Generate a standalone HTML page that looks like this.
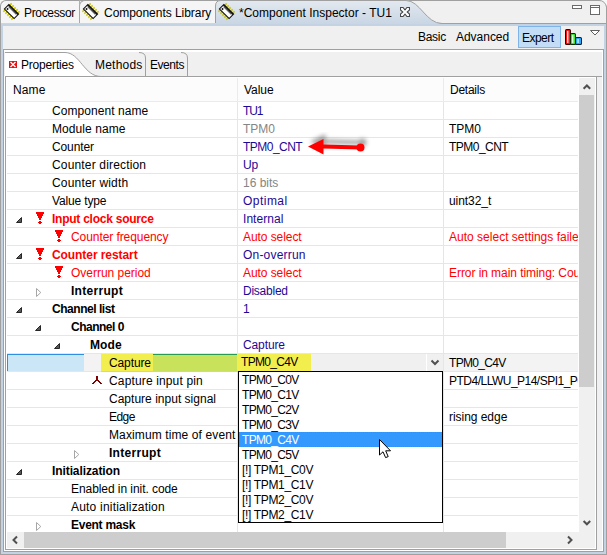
<!DOCTYPE html>
<html><head><meta charset="utf-8"><title>Component Inspector</title>
<style>
html,body{margin:0;padding:0;}
body{width:607px;height:555px;overflow:hidden;position:relative;font-family:"Liberation Sans", sans-serif;font-size:12px;background:#f0f0f0;}
</style></head><body>
<div style="position:absolute;left:0px;top:0px;width:607px;height:555px;background:#f0f0f0"></div>
<div style="position:absolute;left:0px;top:0px;width:607px;height:23px;background:#f6f6f6"></div>
<div style="position:absolute;left:6px;top:0px;width:601px;height:23px;background:#f0f0f0;border-top:1px solid #a0a0a0;box-sizing:border-box"></div>
<div style="position:absolute;left:0;top:0;width:80px;height:23px;background:#f5f5f5;border-left:1px solid #a0a0a0;border-top:1px solid #a0a0a0;border-right:1px solid #b0b0b0;border-top-left-radius:6px;box-sizing:border-box"></div>
<div style="position:absolute;left:79px;top:0;width:137px;height:23px;background:#f5f5f5;border-top:1px solid #a0a0a0;border-left:1px solid #a8a8a8;border-top-left-radius:6px;box-sizing:border-box"></div>
<div style="position:absolute;left:0px;top:23px;width:607px;height:1px;background:#a0a0a0"></div>
<svg style="position:absolute;left:0;top:0" width="607" height="26">
<defs><linearGradient id="ag" x1="0" y1="0" x2="0" y2="1"><stop offset="0" stop-color="#e3e9f0"/><stop offset="1" stop-color="#c6d4e2"/></linearGradient></defs>
<path d="M215,23 L215,6 Q215,0.5 221,0.5 L406,0.5 C420,0.5 426,23.5 442,23.5 L607,23.5 L607,26 L0,26 L0,23 Z" fill="url(#ag)"/>
<path d="M215.5,23 L215.5,6 Q215.5,0.5 221,0.5 L406,0.5 C420,0.5 426,23.5 442,23.5 L606,23.5" fill="none" stroke="#a0a0a0" stroke-width="1"/>
</svg>
<div style="position:absolute;left:1px;top:24px;width:605px;height:2px;background:#c3d3e3"></div>
<div style="position:absolute;left:1px;top:24px;width:2px;height:530px;background:#c3d3e3"></div>
<div style="position:absolute;left:604px;top:24px;width:2px;height:530px;background:#c3d3e3"></div>
<div style="position:absolute;left:1px;top:552px;width:605px;height:2px;background:#c3d3e3"></div>
<div style="position:absolute;left:0px;top:6px;width:1px;height:549px;background:#a0a0a0"></div>
<div style="position:absolute;left:606px;top:0px;width:1px;height:555px;background:#a0a0a0"></div>
<div style="position:absolute;left:0px;top:554px;width:607px;height:1px;background:#a0a0a0"></div>
<div style="position:absolute;left:3px;top:26px;width:601px;height:23px;background:#f0f0f0"></div>
<div style="position:absolute;left:3px;top:49px;width:601px;height:503px;background:#ffffff;border:1px solid #a0a0a0;box-sizing:border-box"></div>
<svg style="position:absolute;left:2px;top:2px" width="20" height="20" viewBox="-10 -10 20 20">
<g transform="translate(-0.5,-0.5) rotate(-45)"><rect x="-5.9" y="-6.3999999999999995" width="2.5" height="1.6" fill="#d0c800"/><rect x="3.4" y="-6.3999999999999995" width="2.5" height="1.6" fill="#d0c800"/><rect x="-5.9" y="-3.5999999999999996" width="2.5" height="1.6" fill="#d0c800"/><rect x="3.4" y="-3.5999999999999996" width="2.5" height="1.6" fill="#d0c800"/><rect x="-5.9" y="-0.8" width="2.5" height="1.6" fill="#d0c800"/><rect x="3.4" y="-0.8" width="2.5" height="1.6" fill="#d0c800"/><rect x="-5.9" y="1.9999999999999998" width="2.5" height="1.6" fill="#d0c800"/><rect x="3.4" y="1.9999999999999998" width="2.5" height="1.6" fill="#d0c800"/><rect x="-5.9" y="4.8" width="2.5" height="1.6" fill="#d0c800"/><rect x="3.4" y="4.8" width="2.5" height="1.6" fill="#d0c800"/>
<rect x="-3.7" y="-7.4" width="7.4" height="14.8" fill="#111"/>
<rect x="-2.6" y="-6.3" width="4.4" height="12.6" fill="#fff"/>
<rect x="0.8" y="-5.5" width="1.0" height="11.0" fill="#555"/>
<rect x="-1.9" y="-5.4" width="1.7" height="1.7" fill="#111"/>
</g></svg>
<svg style="position:absolute;left:81px;top:2px" width="20" height="20" viewBox="-10 -10 20 20">
<g transform="translate(-0.5,-0.5) rotate(-45)"><rect x="-5.9" y="-6.3999999999999995" width="2.5" height="1.6" fill="#d0c800"/><rect x="3.4" y="-6.3999999999999995" width="2.5" height="1.6" fill="#d0c800"/><rect x="-5.9" y="-3.5999999999999996" width="2.5" height="1.6" fill="#d0c800"/><rect x="3.4" y="-3.5999999999999996" width="2.5" height="1.6" fill="#d0c800"/><rect x="-5.9" y="-0.8" width="2.5" height="1.6" fill="#d0c800"/><rect x="3.4" y="-0.8" width="2.5" height="1.6" fill="#d0c800"/><rect x="-5.9" y="1.9999999999999998" width="2.5" height="1.6" fill="#d0c800"/><rect x="3.4" y="1.9999999999999998" width="2.5" height="1.6" fill="#d0c800"/><rect x="-5.9" y="4.8" width="2.5" height="1.6" fill="#d0c800"/><rect x="3.4" y="4.8" width="2.5" height="1.6" fill="#d0c800"/>
<rect x="-3.7" y="-7.4" width="7.4" height="14.8" fill="#111"/>
<rect x="-2.6" y="-6.3" width="4.4" height="12.6" fill="#fff"/>
<rect x="0.8" y="-5.5" width="1.0" height="11.0" fill="#555"/>
<rect x="-1.9" y="-5.4" width="1.7" height="1.7" fill="#111"/>
</g></svg>
<svg style="position:absolute;left:217px;top:2px" width="20" height="20" viewBox="-10 -10 20 20">
<g transform="translate(-0.5,-0.5) rotate(-45)"><rect x="-5.9" y="-6.3999999999999995" width="2.5" height="1.6" fill="#d0c800"/><rect x="3.4" y="-6.3999999999999995" width="2.5" height="1.6" fill="#d0c800"/><rect x="-5.9" y="-3.5999999999999996" width="2.5" height="1.6" fill="#d0c800"/><rect x="3.4" y="-3.5999999999999996" width="2.5" height="1.6" fill="#d0c800"/><rect x="-5.9" y="-0.8" width="2.5" height="1.6" fill="#d0c800"/><rect x="3.4" y="-0.8" width="2.5" height="1.6" fill="#d0c800"/><rect x="-5.9" y="1.9999999999999998" width="2.5" height="1.6" fill="#d0c800"/><rect x="3.4" y="1.9999999999999998" width="2.5" height="1.6" fill="#d0c800"/><rect x="-5.9" y="4.8" width="2.5" height="1.6" fill="#d0c800"/><rect x="3.4" y="4.8" width="2.5" height="1.6" fill="#d0c800"/>
<rect x="-3.7" y="-7.4" width="7.4" height="14.8" fill="#111"/>
<rect x="-2.6" y="-6.3" width="4.4" height="12.6" fill="#fff"/>
<rect x="0.8" y="-5.5" width="1.0" height="11.0" fill="#555"/>
<rect x="-1.9" y="-5.4" width="1.7" height="1.7" fill="#111"/>
</g></svg>
<div style="position:absolute;left:24px;top:5px;line-height:17px;white-space:nowrap;font-size:12px;color:#000;letter-spacing:-0.338px;">Processor</div>
<div style="position:absolute;left:104px;top:5px;line-height:17px;white-space:nowrap;font-size:12px;color:#000;letter-spacing:-0.041px;">Components Library</div>
<div style="position:absolute;left:239px;top:5px;line-height:17px;white-space:nowrap;font-size:12px;color:#000;letter-spacing:0.012px;">*Component Inspector - TU1</div>
<svg style="position:absolute;left:400px;top:7px" width="10" height="10" viewBox="0 0 10 10"><path d="M0.5,0.5 L3,0.5 L5,2.8 L7,0.5 L9.5,0.5 L9.5,3 L7.2,5 L9.5,7 L9.5,9.5 L7,9.5 L5,7.2 L3,9.5 L0.5,9.5 L0.5,7 L2.8,5 L0.5,3 Z" fill="#fff" stroke="#484848" stroke-width="1.1"/></svg>
<div style="position:absolute;left:572px;top:5px;width:10px;height:4px;border:1px solid #6a6a6a;background:#fff;box-sizing:border-box"></div>
<div style="position:absolute;left:590px;top:5px;width:10px;height:10px;border:1px solid #6a6a6a;background:#fff;box-sizing:border-box"></div>
<div style="position:absolute;left:591px;top:7px;width:8px;height:1px;background:#6a6a6a"></div>
<svg style="position:absolute;left:597px;top:0" width="10" height="10" viewBox="0 0 10 10"><path d="M2,0 L10,0 L10,9 Q9.5,0.5 2,0.5 Z" fill="#f8f8f8"/><path d="M2,0.5 Q8,0.5 9.5,7 L9.5,10" fill="none" stroke="#a0a0a0" stroke-width="1"/></svg>
<div style="position:absolute;left:418px;top:29px;line-height:17px;white-space:nowrap;font-size:12px;color:#000;letter-spacing:-0.3px;">Basic</div>
<div style="position:absolute;left:456px;top:29px;line-height:17px;white-space:nowrap;font-size:12px;color:#000;letter-spacing:-0.029px;">Advanced</div>
<div style="position:absolute;left:518px;top:26px;width:43px;height:22px;background:#c4ddf6;border:1px solid #7fb4e8;box-sizing:border-box"></div>
<div style="position:absolute;left:522px;top:30px;line-height:17px;white-space:nowrap;font-size:12px;color:#000;letter-spacing:-0.54px;">Expert</div>
<svg style="position:absolute;left:564px;top:28px" width="19" height="18" viewBox="0 0 19 18">
<rect x="1" y="1" width="6" height="16" rx="1.5" fill="#3a0000"/><rect x="2" y="2" width="4" height="14" rx="0.8" fill="#ff1414"/><rect x="3.1" y="3" width="1.3" height="12" fill="#ffe8e8"/>
<rect x="6" y="5" width="6" height="12" rx="1.5" fill="#0a3000"/><rect x="7" y="6" width="4" height="10" rx="0.8" fill="#3ee636"/><rect x="8.1" y="7" width="1.3" height="8" fill="#e8ffe8"/>
<rect x="11" y="9" width="7" height="8" rx="1.5" fill="#002038"/><rect x="12" y="10" width="5" height="6" rx="0.8" fill="#28a8ff"/><rect x="13.4" y="11" width="1.3" height="4" fill="#e8f4ff"/>
</svg>
<svg style="position:absolute;left:589px;top:29px" width="13" height="8" viewBox="0 0 13 8"><path d="M1.5,1.5 L10.5,1.5 L6,6 Z" fill="#fff" stroke="#606060" stroke-width="1"/></svg>
<div style="position:absolute;left:4px;top:52px;width:598px;height:24px;background:#f0f0f0"></div>
<svg style="position:absolute;left:0;top:50px" width="200" height="28">
<path d="M5,2.5 L65,2.5 C80,2.5 84,26.5 101,26.5 L5,26.5 Z" fill="#fff"/>
<path d="M5,2.5 L65,2.5 C80,2.5 84,26.5 101,26.5" fill="none" stroke="#a0a0a0" stroke-width="1"/>
<path d="M139,2.5 Q145.5,2.5 145.5,8 L145.5,26" fill="none" stroke="#a0a0a0" stroke-width="1"/>
<path d="M181,2.5 Q187.5,2.5 187.5,8 L187.5,26" fill="none" stroke="#a0a0a0" stroke-width="1"/>
</svg>
<svg style="position:absolute;left:9px;top:61px" width="8" height="7" viewBox="0 0 8 7" shape-rendering="crispEdges"><rect width="8" height="7" fill="#e81010"/><path d="M1.5,1 L6.5,6 M6.5,1 L1.5,6" stroke="#fff" stroke-width="1.3" shape-rendering="geometricPrecision"/></svg>
<div style="position:absolute;left:21px;top:57px;line-height:17px;white-space:nowrap;font-size:12px;color:#000;letter-spacing:-0.189px;">Properties</div>
<div style="position:absolute;left:95px;top:57px;line-height:17px;white-space:nowrap;font-size:12px;color:#000;letter-spacing:0.217px;">Methods</div>
<div style="position:absolute;left:150px;top:57px;line-height:17px;white-space:nowrap;font-size:12px;color:#000;letter-spacing:-0.44px;">Events</div>
<div style="position:absolute;left:5px;top:76px;width:592px;height:474px;background:#fff;border:1px solid #a0a0a0;box-sizing:border-box"></div>
<div style="position:absolute;left:597px;top:77px;width:5px;height:473px;background:#f0f0f0"></div>
<div style="position:absolute;left:596px;top:76px;width:6px;height:1px;background:#a0a0a0"></div>
<div style="position:absolute;left:7px;top:78px;width:571px;height:23px;background:#fcfcfc"></div>
<div style="position:absolute;left:7px;top:101px;width:571px;height:1px;background:#e5ecf5"></div>
<div style="position:absolute;left:237px;top:78px;width:1px;height:23px;background:#e5ecf5"></div>
<div style="position:absolute;left:443px;top:78px;width:1px;height:23px;background:#e5ecf5"></div>
<div style="position:absolute;left:13px;top:82px;line-height:17px;white-space:nowrap;font-size:12px;color:#000;letter-spacing:0.1px;">Name</div>
<div style="position:absolute;left:244px;top:82px;line-height:17px;white-space:nowrap;font-size:12px;color:#000;letter-spacing:-0.05px;">Value</div>
<div style="position:absolute;left:450px;top:82px;line-height:17px;white-space:nowrap;font-size:12px;color:#000;letter-spacing:-0.25px;">Details</div>
<div style="position:absolute;left:7px;top:102px;width:571px;height:430px;overflow:hidden">
<div style="position:absolute;left:0px;top:17px;width:571px;height:1px;background:#e6e6e6"></div>
<div style="position:absolute;left:230px;top:0px;width:1px;height:17px;background:#e6e6e6"></div>
<div style="position:absolute;left:436px;top:0px;width:1px;height:17px;background:#e6e6e6"></div>
<div style="position:absolute;left:45px;top:1px;line-height:17px;white-space:nowrap;font-size:12px;color:#000;letter-spacing:0.062px;">Component name</div>
<div style="position:absolute;left:236px;top:1px;line-height:17px;white-space:nowrap;font-size:12px;color:#1e0896;letter-spacing:-1.15px;">TU1</div>
<div style="position:absolute;left:0px;top:35px;width:571px;height:1px;background:#e6e6e6"></div>
<div style="position:absolute;left:230px;top:18px;width:1px;height:17px;background:#e6e6e6"></div>
<div style="position:absolute;left:436px;top:18px;width:1px;height:17px;background:#e6e6e6"></div>
<div style="position:absolute;left:45px;top:19px;line-height:17px;white-space:nowrap;font-size:12px;color:#000;letter-spacing:0.08px;">Module name</div>
<div style="position:absolute;left:236px;top:19px;line-height:17px;white-space:nowrap;font-size:12px;color:#858585;letter-spacing:-0.067px;">TPM0</div>
<div style="position:absolute;left:442px;top:19px;line-height:17px;white-space:nowrap;font-size:12px;color:#000;letter-spacing:-0.067px;">TPM0</div>
<div style="position:absolute;left:0px;top:53px;width:571px;height:1px;background:#e6e6e6"></div>
<div style="position:absolute;left:230px;top:36px;width:1px;height:17px;background:#e6e6e6"></div>
<div style="position:absolute;left:436px;top:36px;width:1px;height:17px;background:#e6e6e6"></div>
<div style="position:absolute;left:45px;top:37px;line-height:17px;white-space:nowrap;font-size:12px;color:#000;letter-spacing:-0.117px;">Counter</div>
<div style="position:absolute;left:236px;top:37px;line-height:17px;white-space:nowrap;font-size:12px;color:#1e0896;letter-spacing:-0.529px;">TPM0_CNT</div>
<div style="position:absolute;left:442px;top:37px;line-height:17px;white-space:nowrap;font-size:12px;color:#000;letter-spacing:-0.529px;">TPM0_CNT</div>
<div style="position:absolute;left:0px;top:71px;width:571px;height:1px;background:#e6e6e6"></div>
<div style="position:absolute;left:230px;top:54px;width:1px;height:17px;background:#e6e6e6"></div>
<div style="position:absolute;left:436px;top:54px;width:1px;height:17px;background:#e6e6e6"></div>
<div style="position:absolute;left:45px;top:55px;line-height:17px;white-space:nowrap;font-size:12px;color:#000;letter-spacing:0.162px;">Counter direction</div>
<div style="position:absolute;left:236px;top:55px;line-height:17px;white-space:nowrap;font-size:12px;color:#1e0896;letter-spacing:-0.2px;">Up</div>
<div style="position:absolute;left:0px;top:89px;width:571px;height:1px;background:#e6e6e6"></div>
<div style="position:absolute;left:230px;top:72px;width:1px;height:17px;background:#e6e6e6"></div>
<div style="position:absolute;left:436px;top:72px;width:1px;height:17px;background:#e6e6e6"></div>
<div style="position:absolute;left:45px;top:73px;line-height:17px;white-space:nowrap;font-size:12px;color:#000;letter-spacing:0.175px;">Counter width</div>
<div style="position:absolute;left:236px;top:73px;line-height:17px;white-space:nowrap;font-size:12px;color:#858585;letter-spacing:-0.017px;">16 bits</div>
<div style="position:absolute;left:0px;top:107px;width:571px;height:1px;background:#e6e6e6"></div>
<div style="position:absolute;left:230px;top:90px;width:1px;height:17px;background:#e6e6e6"></div>
<div style="position:absolute;left:436px;top:90px;width:1px;height:17px;background:#e6e6e6"></div>
<div style="position:absolute;left:45px;top:91px;line-height:17px;white-space:nowrap;font-size:12px;color:#000;letter-spacing:-0.144px;">Value type</div>
<div style="position:absolute;left:236px;top:91px;line-height:17px;white-space:nowrap;font-size:12px;color:#1e0896;letter-spacing:0.467px;">Optimal</div>
<div style="position:absolute;left:442px;top:91px;line-height:17px;white-space:nowrap;font-size:12px;color:#000;letter-spacing:-0.057px;">uint32_t</div>
<div style="position:absolute;left:0px;top:125px;width:571px;height:1px;background:#e6e6e6"></div>
<div style="position:absolute;left:230px;top:108px;width:1px;height:17px;background:#e6e6e6"></div>
<div style="position:absolute;left:436px;top:108px;width:1px;height:17px;background:#e6e6e6"></div>
<svg style="position:absolute;left:9px;top:115px" width="8" height="8" viewBox="0 0 8 8"><path d="M5.5,0.5 L5.5,5.5 L0.5,5.5 Z" fill="#595959" stroke="#262626" stroke-width="1" stroke-linejoin="round"/></svg>
<svg style="position:absolute;left:29px;top:110px" width="8" height="12" viewBox="0 0 8 12" shape-rendering="crispEdges" fill="#ff0000">
<rect x="0" y="0" width="8" height="2"/><rect x="1" y="2" width="6" height="2"/><rect x="2" y="4" width="4" height="2"/><rect x="3" y="6" width="2" height="2"/>
<rect x="3" y="9" width="2" height="3"/><rect x="2" y="10" width="4" height="1"/></svg>
<div style="position:absolute;left:45px;top:109px;line-height:17px;white-space:nowrap;font-size:12px;color:#ff0000;font-weight:bold;letter-spacing:-0.247px;">Input clock source</div>
<div style="position:absolute;left:236px;top:109px;line-height:17px;white-space:nowrap;font-size:12px;color:#1e0896;letter-spacing:0.043px;">Internal</div>
<div style="position:absolute;left:0px;top:143px;width:571px;height:1px;background:#e6e6e6"></div>
<div style="position:absolute;left:230px;top:126px;width:1px;height:17px;background:#e6e6e6"></div>
<div style="position:absolute;left:436px;top:126px;width:1px;height:17px;background:#e6e6e6"></div>
<svg style="position:absolute;left:48px;top:128px" width="8" height="12" viewBox="0 0 8 12" shape-rendering="crispEdges" fill="#ff0000">
<rect x="0" y="0" width="8" height="2"/><rect x="1" y="2" width="6" height="2"/><rect x="2" y="4" width="4" height="2"/><rect x="3" y="6" width="2" height="2"/>
<rect x="3" y="9" width="2" height="3"/><rect x="2" y="10" width="4" height="1"/></svg>
<div style="position:absolute;left:64px;top:127px;line-height:17px;white-space:nowrap;font-size:12px;color:#ff0000;letter-spacing:-0.075px;">Counter frequency</div>
<div style="position:absolute;left:236px;top:127px;line-height:17px;white-space:nowrap;font-size:12px;color:#ff0000;letter-spacing:-0.07px;">Auto select</div>
<div style="position:absolute;left:442px;top:127px;line-height:17px;white-space:nowrap;font-size:12px;color:#ff0000;letter-spacing:0.012px;">Auto select settings failed</div>
<div style="position:absolute;left:0px;top:161px;width:571px;height:1px;background:#e6e6e6"></div>
<div style="position:absolute;left:230px;top:144px;width:1px;height:17px;background:#e6e6e6"></div>
<div style="position:absolute;left:436px;top:144px;width:1px;height:17px;background:#e6e6e6"></div>
<svg style="position:absolute;left:9px;top:151px" width="8" height="8" viewBox="0 0 8 8"><path d="M5.5,0.5 L5.5,5.5 L0.5,5.5 Z" fill="#595959" stroke="#262626" stroke-width="1" stroke-linejoin="round"/></svg>
<svg style="position:absolute;left:29px;top:146px" width="8" height="12" viewBox="0 0 8 12" shape-rendering="crispEdges" fill="#ff0000">
<rect x="0" y="0" width="8" height="2"/><rect x="1" y="2" width="6" height="2"/><rect x="2" y="4" width="4" height="2"/><rect x="3" y="6" width="2" height="2"/>
<rect x="3" y="9" width="2" height="3"/><rect x="2" y="10" width="4" height="1"/></svg>
<div style="position:absolute;left:45px;top:145px;line-height:17px;white-space:nowrap;font-size:12px;color:#ff0000;font-weight:bold;letter-spacing:-0.071px;">Counter restart</div>
<div style="position:absolute;left:236px;top:145px;line-height:17px;white-space:nowrap;font-size:12px;color:#1e0896;letter-spacing:0.2px;">On-overrun</div>
<div style="position:absolute;left:0px;top:179px;width:571px;height:1px;background:#e6e6e6"></div>
<div style="position:absolute;left:230px;top:162px;width:1px;height:17px;background:#e6e6e6"></div>
<div style="position:absolute;left:436px;top:162px;width:1px;height:17px;background:#e6e6e6"></div>
<svg style="position:absolute;left:48px;top:164px" width="8" height="12" viewBox="0 0 8 12" shape-rendering="crispEdges" fill="#ff0000">
<rect x="0" y="0" width="8" height="2"/><rect x="1" y="2" width="6" height="2"/><rect x="2" y="4" width="4" height="2"/><rect x="3" y="6" width="2" height="2"/>
<rect x="3" y="9" width="2" height="3"/><rect x="2" y="10" width="4" height="1"/></svg>
<div style="position:absolute;left:64px;top:163px;line-height:17px;white-space:nowrap;font-size:12px;color:#ff0000;letter-spacing:-0.023px;">Overrun period</div>
<div style="position:absolute;left:236px;top:163px;line-height:17px;white-space:nowrap;font-size:12px;color:#ff0000;letter-spacing:-0.07px;">Auto select</div>
<div style="position:absolute;left:442px;top:163px;line-height:17px;white-space:nowrap;font-size:12px;color:#ff0000;letter-spacing:-0.061px;">Error in main timing: Counter</div>
<div style="position:absolute;left:0px;top:197px;width:571px;height:1px;background:#e6e6e6"></div>
<div style="position:absolute;left:230px;top:180px;width:1px;height:17px;background:#e6e6e6"></div>
<div style="position:absolute;left:436px;top:180px;width:1px;height:17px;background:#e6e6e6"></div>
<svg style="position:absolute;left:29px;top:186px" width="8" height="12" viewBox="0 0 8 12"><path d="M0.5,0.5 L0.5,8.5 L4.8,4.5 Z" fill="#fff" stroke="#a6a6a6" stroke-width="1" stroke-linejoin="round"/></svg>
<div style="position:absolute;left:64px;top:181px;line-height:17px;white-space:nowrap;font-size:12px;color:#000;font-weight:bold;letter-spacing:0.287px;">Interrupt</div>
<div style="position:absolute;left:236px;top:181px;line-height:17px;white-space:nowrap;font-size:12px;color:#1e0896;letter-spacing:-0.243px;">Disabled</div>
<div style="position:absolute;left:0px;top:215px;width:571px;height:1px;background:#e6e6e6"></div>
<div style="position:absolute;left:230px;top:198px;width:1px;height:17px;background:#e6e6e6"></div>
<div style="position:absolute;left:436px;top:198px;width:1px;height:17px;background:#e6e6e6"></div>
<svg style="position:absolute;left:9px;top:205px" width="8" height="8" viewBox="0 0 8 8"><path d="M5.5,0.5 L5.5,5.5 L0.5,5.5 Z" fill="#595959" stroke="#262626" stroke-width="1" stroke-linejoin="round"/></svg>
<div style="position:absolute;left:45px;top:199px;line-height:17px;white-space:nowrap;font-size:12px;color:#000;font-weight:bold;letter-spacing:-0.464px;">Channel list</div>
<div style="position:absolute;left:236px;top:199px;line-height:17px;white-space:nowrap;font-size:12px;color:#1e0896;">1</div>
<div style="position:absolute;left:0px;top:233px;width:571px;height:1px;background:#e6e6e6"></div>
<div style="position:absolute;left:230px;top:216px;width:1px;height:17px;background:#e6e6e6"></div>
<div style="position:absolute;left:436px;top:216px;width:1px;height:17px;background:#e6e6e6"></div>
<svg style="position:absolute;left:28px;top:223px" width="8" height="8" viewBox="0 0 8 8"><path d="M5.5,0.5 L5.5,5.5 L0.5,5.5 Z" fill="#595959" stroke="#262626" stroke-width="1" stroke-linejoin="round"/></svg>
<div style="position:absolute;left:64px;top:217px;line-height:17px;white-space:nowrap;font-size:12px;color:#000;font-weight:bold;letter-spacing:-0.5px;">Channel 0</div>
<div style="position:absolute;left:0px;top:251px;width:571px;height:1px;background:#e6e6e6"></div>
<div style="position:absolute;left:230px;top:234px;width:1px;height:17px;background:#e6e6e6"></div>
<div style="position:absolute;left:436px;top:234px;width:1px;height:17px;background:#e6e6e6"></div>
<svg style="position:absolute;left:47px;top:241px" width="8" height="8" viewBox="0 0 8 8"><path d="M5.5,0.5 L5.5,5.5 L0.5,5.5 Z" fill="#595959" stroke="#262626" stroke-width="1" stroke-linejoin="round"/></svg>
<div style="position:absolute;left:83px;top:235px;line-height:17px;white-space:nowrap;font-size:12px;color:#000;font-weight:bold;letter-spacing:0.1px;">Mode</div>
<div style="position:absolute;left:236px;top:235px;line-height:17px;white-space:nowrap;font-size:12px;color:#1e0896;letter-spacing:-0.117px;">Capture</div>
<div style="position:absolute;left:0px;top:269px;width:571px;height:1px;background:#e6e6e6"></div>
<div style="position:absolute;left:230px;top:252px;width:1px;height:17px;background:#e6e6e6"></div>
<div style="position:absolute;left:436px;top:252px;width:1px;height:17px;background:#e6e6e6"></div>
<div style="position:absolute;left:0px;top:252px;width:77px;height:17px;background:#cbe6f6;border-left:1px solid #2e8fe0;border-top:1px solid #2e8fe0;box-sizing:border-box"></div>
<div style="position:absolute;left:77px;top:252px;width:17px;height:17px;background:#f3f3f3"></div>
<div style="position:absolute;left:94px;top:252px;width:52px;height:17px;background:#f2ee4e"></div>
<div style="position:absolute;left:146px;top:252px;width:84px;height:17px;background:#c8e35b;border-top:1px solid #2a9a50;box-sizing:border-box"></div>
<div style="position:absolute;left:230px;top:252px;width:74px;height:17px;background:#f2ee4e"></div>
<div style="position:absolute;left:304px;top:252px;width:132px;height:17px;background:#f0f0f0"></div>
<div style="position:absolute;left:419px;top:252px;width:1px;height:17px;background:#fff"></div>
<div style="position:absolute;left:437px;top:252px;width:134px;height:17px;background:#f3f3f3"></div>
<div style="position:absolute;left:94px;top:269px;width:210px;height:1px;background:#e2de48"></div>
<div style="position:absolute;left:102px;top:253px;line-height:17px;white-space:nowrap;font-size:12px;color:#000;letter-spacing:-0.117px;">Capture</div>
<div style="position:absolute;left:234px;top:252px;line-height:17px;white-space:nowrap;font-size:12px;color:#000;letter-spacing:-0.671px;">TPM0_C4V</div>
<div style="position:absolute;left:442px;top:253px;line-height:17px;white-space:nowrap;font-size:12px;color:#000;letter-spacing:-0.671px;">TPM0_C4V</div>
<svg style="position:absolute;left:423px;top:257px" width="10" height="8" viewBox="0 0 10 8"><path d="M1.5,1.5 L5,5 L8.5,1.5" fill="none" stroke="#505050" stroke-width="2"/></svg>
<div style="position:absolute;left:0px;top:287px;width:571px;height:1px;background:#e6e6e6"></div>
<div style="position:absolute;left:230px;top:270px;width:1px;height:17px;background:#e6e6e6"></div>
<div style="position:absolute;left:436px;top:270px;width:1px;height:17px;background:#e6e6e6"></div>
<svg style="position:absolute;left:85px;top:274px" width="10" height="9" viewBox="0 0 10 9" shape-rendering="crispEdges" fill="#800000">
<rect x="4" y="0" width="2" height="5"/><rect x="3" y="4" width="4" height="1"/><rect x="2" y="5" width="2" height="1"/><rect x="6" y="5" width="2" height="1"/>
<rect x="1" y="6" width="2" height="1"/><rect x="7" y="6" width="2" height="1"/><rect x="0" y="7" width="2" height="1"/><rect x="8" y="7" width="2" height="1"/></svg>
<div style="position:absolute;left:102px;top:271px;line-height:17px;white-space:nowrap;font-size:12px;color:#000;letter-spacing:0.144px;">Capture input pin</div>
<div style="position:absolute;left:442px;top:271px;line-height:17px;white-space:nowrap;font-size:12px;color:#000;letter-spacing:-0.509px;">PTD4/LLWU_P14/SPI1_PCS0</div>
<div style="position:absolute;left:0px;top:305px;width:571px;height:1px;background:#e6e6e6"></div>
<div style="position:absolute;left:230px;top:288px;width:1px;height:17px;background:#e6e6e6"></div>
<div style="position:absolute;left:436px;top:288px;width:1px;height:17px;background:#e6e6e6"></div>
<div style="position:absolute;left:102px;top:289px;line-height:17px;white-space:nowrap;font-size:12px;color:#000;letter-spacing:0.016px;">Capture input signal</div>
<div style="position:absolute;left:0px;top:323px;width:571px;height:1px;background:#e6e6e6"></div>
<div style="position:absolute;left:230px;top:306px;width:1px;height:17px;background:#e6e6e6"></div>
<div style="position:absolute;left:436px;top:306px;width:1px;height:17px;background:#e6e6e6"></div>
<div style="position:absolute;left:102px;top:307px;line-height:17px;white-space:nowrap;font-size:12px;color:#000;letter-spacing:-0.567px;">Edge</div>
<div style="position:absolute;left:442px;top:307px;line-height:17px;white-space:nowrap;font-size:12px;color:#000;letter-spacing:-0.04px;">rising edge</div>
<div style="position:absolute;left:0px;top:341px;width:571px;height:1px;background:#e6e6e6"></div>
<div style="position:absolute;left:230px;top:324px;width:1px;height:17px;background:#e6e6e6"></div>
<div style="position:absolute;left:436px;top:324px;width:1px;height:17px;background:#e6e6e6"></div>
<div style="position:absolute;left:102px;top:325px;line-height:17px;white-space:nowrap;font-size:12px;color:#000;letter-spacing:0.115px;">Maximum time of event</div>
<div style="position:absolute;left:0px;top:359px;width:571px;height:1px;background:#e6e6e6"></div>
<div style="position:absolute;left:230px;top:342px;width:1px;height:17px;background:#e6e6e6"></div>
<div style="position:absolute;left:436px;top:342px;width:1px;height:17px;background:#e6e6e6"></div>
<svg style="position:absolute;left:67px;top:348px" width="8" height="12" viewBox="0 0 8 12"><path d="M0.5,0.5 L0.5,8.5 L4.8,4.5 Z" fill="#fff" stroke="#a6a6a6" stroke-width="1" stroke-linejoin="round"/></svg>
<div style="position:absolute;left:102px;top:343px;line-height:17px;white-space:nowrap;font-size:12px;color:#000;font-weight:bold;letter-spacing:0.287px;">Interrupt</div>
<div style="position:absolute;left:0px;top:377px;width:571px;height:1px;background:#e6e6e6"></div>
<div style="position:absolute;left:230px;top:360px;width:1px;height:17px;background:#e6e6e6"></div>
<div style="position:absolute;left:436px;top:360px;width:1px;height:17px;background:#e6e6e6"></div>
<svg style="position:absolute;left:9px;top:367px" width="8" height="8" viewBox="0 0 8 8"><path d="M5.5,0.5 L5.5,5.5 L0.5,5.5 Z" fill="#595959" stroke="#262626" stroke-width="1" stroke-linejoin="round"/></svg>
<div style="position:absolute;left:45px;top:361px;line-height:17px;white-space:nowrap;font-size:12px;color:#000;font-weight:bold;letter-spacing:-0.092px;">Initialization</div>
<div style="position:absolute;left:0px;top:395px;width:571px;height:1px;background:#e6e6e6"></div>
<div style="position:absolute;left:230px;top:378px;width:1px;height:17px;background:#e6e6e6"></div>
<div style="position:absolute;left:436px;top:378px;width:1px;height:17px;background:#e6e6e6"></div>
<div style="position:absolute;left:64px;top:379px;line-height:17px;white-space:nowrap;font-size:12px;color:#000;letter-spacing:-0.065px;">Enabled in init. code</div>
<div style="position:absolute;left:0px;top:413px;width:571px;height:1px;background:#e6e6e6"></div>
<div style="position:absolute;left:230px;top:396px;width:1px;height:17px;background:#e6e6e6"></div>
<div style="position:absolute;left:436px;top:396px;width:1px;height:17px;background:#e6e6e6"></div>
<div style="position:absolute;left:64px;top:397px;line-height:17px;white-space:nowrap;font-size:12px;color:#000;letter-spacing:0.2px;">Auto initialization</div>
<div style="position:absolute;left:0px;top:431px;width:571px;height:1px;background:#e6e6e6"></div>
<div style="position:absolute;left:230px;top:414px;width:1px;height:17px;background:#e6e6e6"></div>
<div style="position:absolute;left:436px;top:414px;width:1px;height:17px;background:#e6e6e6"></div>
<svg style="position:absolute;left:29px;top:420px" width="8" height="12" viewBox="0 0 8 12"><path d="M0.5,0.5 L0.5,8.5 L4.8,4.5 Z" fill="#fff" stroke="#a6a6a6" stroke-width="1" stroke-linejoin="round"/></svg>
<div style="position:absolute;left:64px;top:415px;line-height:17px;white-space:nowrap;font-size:12px;color:#000;font-weight:bold;letter-spacing:-0.267px;">Event mask</div>
<svg style="position:absolute;left:293px;top:30px" width="72" height="28" viewBox="0 0 72 28">
<defs><filter id="sh" x="-20%" y="-50%" width="140%" height="200%"><feGaussianBlur stdDeviation="2"/></filter></defs>
<g filter="url(#sh)" opacity="0.55" transform="translate(2,-5)"><path d="M8,14.5 L23.5,7 L23.5,12.5 L60,13.5 L60,17.5 L23.5,16.5 L23.5,22.5 Z" fill="#555"/><circle cx="60.5" cy="15.5" r="4" fill="#555"/></g>
<path d="M8,14.5 L23.5,7 L23.5,12.5 L60,13.5 L60,17.5 L23.5,16.5 L23.5,22.5 Z" fill="#ff0000"/><circle cx="60.5" cy="15.5" r="4" fill="#ff0000"/>
</svg>
</div>
<div style="position:absolute;left:579px;top:78px;width:16px;height:454px;background:#f0f0f0"></div>
<div style="position:absolute;left:579px;top:95px;width:15px;height:292px;background:#cdcdcd"></div>
<svg style="position:absolute;left:582px;top:83px" width="10" height="8" viewBox="0 0 10 8"><path d="M1.6,5.8 L4.9,2.5 L8.2,5.8" fill="none" stroke="#505050" stroke-width="2"/></svg>
<svg style="position:absolute;left:582px;top:519px" width="10" height="8" viewBox="0 0 10 8"><path d="M1.6,2 L4.9,5.3 L8.2,2" fill="none" stroke="#505050" stroke-width="2"/></svg>
<div style="position:absolute;left:7px;top:532px;width:588px;height:16px;background:#f0f0f0"></div>
<div style="position:absolute;left:24px;top:532px;width:482px;height:16px;background:#cdcdcd"></div>
<svg style="position:absolute;left:11px;top:535px" width="8" height="10" viewBox="0 0 8 10"><path d="M6,1.5 L2.5,5 L6,8.5" fill="none" stroke="#505050" stroke-width="2"/></svg>
<svg style="position:absolute;left:566px;top:535px" width="8" height="10" viewBox="0 0 8 10"><path d="M2,1.5 L5.5,5 L2,8.5" fill="none" stroke="#505050" stroke-width="2"/></svg>
<div style="position:absolute;left:238px;top:371px;width:205px;height:152px;background:#fff;border:1px solid #000;box-sizing:border-box"></div>
<div style="position:absolute;left:242px;top:372px;line-height:17px;white-space:nowrap;font-size:12px;color:#000;letter-spacing:-0.671px;">TPM0_C0V</div>
<div style="position:absolute;left:242px;top:387px;line-height:17px;white-space:nowrap;font-size:12px;color:#000;letter-spacing:-0.671px;">TPM0_C1V</div>
<div style="position:absolute;left:242px;top:402px;line-height:17px;white-space:nowrap;font-size:12px;color:#000;letter-spacing:-0.671px;">TPM0_C2V</div>
<div style="position:absolute;left:242px;top:417px;line-height:17px;white-space:nowrap;font-size:12px;color:#000;letter-spacing:-0.671px;">TPM0_C3V</div>
<div style="position:absolute;left:239px;top:432px;width:203px;height:15px;background:#3399ff;border:1px dotted #c87020;box-sizing:border-box"></div>
<div style="position:absolute;left:242px;top:432px;line-height:17px;white-space:nowrap;font-size:12px;color:#fff;letter-spacing:-0.671px;">TPM0_C4V</div>
<div style="position:absolute;left:242px;top:447px;line-height:17px;white-space:nowrap;font-size:12px;color:#000;letter-spacing:-0.671px;">TPM0_C5V</div>
<div style="position:absolute;left:242px;top:462px;line-height:17px;white-space:nowrap;font-size:12px;color:#000;letter-spacing:-0.336px;">[!] TPM1_C0V</div>
<div style="position:absolute;left:242px;top:477px;line-height:17px;white-space:nowrap;font-size:12px;color:#000;letter-spacing:-0.336px;">[!] TPM1_C1V</div>
<div style="position:absolute;left:242px;top:492px;line-height:17px;white-space:nowrap;font-size:12px;color:#000;letter-spacing:-0.336px;">[!] TPM2_C0V</div>
<div style="position:absolute;left:242px;top:507px;line-height:17px;white-space:nowrap;font-size:12px;color:#000;letter-spacing:-0.336px;">[!] TPM2_C1V</div>
<svg style="position:absolute;left:378px;top:438px" width="14" height="21" viewBox="0 0 14 21">
<path d="M1.5,1.5 L1.5,17 L5,13.8 L7.6,19.6 L10.2,18.6 L7.7,12.8 L12.5,12.8 Z" fill="#fff" stroke="#000" stroke-width="1" stroke-linejoin="miter"/></svg>
</body></html>
